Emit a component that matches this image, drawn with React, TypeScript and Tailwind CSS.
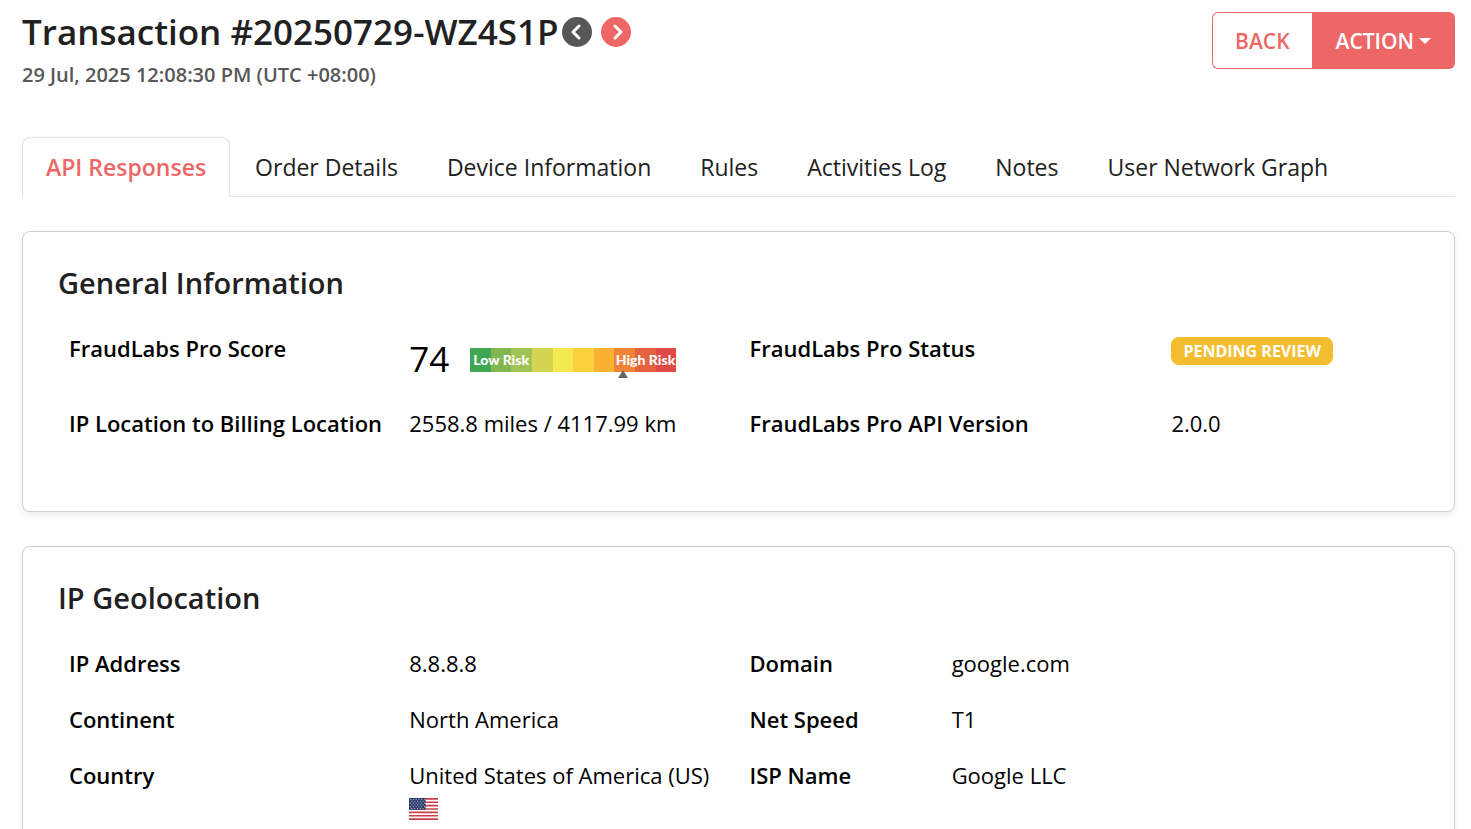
import { ReactNode } from 'react';

const tabs = [
  'API Responses',
  'Order Details',
  'Device Information',
  'Rules',
  'Activities Log',
  'Notes',
  'User Network Graph',
];

const riskColors = [
  'bg-[#3fa653]',
  'bg-[#82b651]',
  'bg-[#9fc354]',
  'bg-[#d3d551]',
  'bg-[#f5e951]',
  'bg-[#fbd13e]',
  'bg-[#f8b133]',
  'bg-[#ef8338]',
  'bg-[#e5623f]',
  'bg-[#e04946]',
];

function Card({ title, children }: { title: string; children: ReactNode }) {
  return (
    <section className="rounded-lg border border-[#cfcfcf] bg-white px-[35px] pt-[31px] pb-[70px] shadow-[0_3px_6px_rgba(0,0,0,0.08)]">
      <h2 className="text-[29px] leading-10 font-semibold text-[#212121]">{title}</h2>
      {children}
    </section>
  );
}

function Term({ children }: { children: ReactNode }) {
  return <dt className="px-[11px] font-semibold">{children}</dt>;
}

function Value({ children }: { children: ReactNode }) {
  return <dd className="px-[11px]">{children}</dd>;
}

function RiskMeter({ score }: { score: number }) {
  return (
    <div className="flex items-end gap-[21px] pt-[6px]">
      <span className="text-[35px] leading-[42px]">{score}</span>
      <div className="relative mb-2 flex h-6 w-[206px]">
        {riskColors.map((color) => (
          <span key={color} className={`flex-1 ${color}`} />
        ))}
        <div className="absolute inset-0 flex items-center justify-between pr-px pl-[3px] font-[Lato,sans-serif] text-sm leading-6 font-black text-white">
          <span>Low Risk</span>
          <span>High Risk</span>
        </div>
        <svg
          className="absolute top-[22px] h-2 w-[10px] -translate-x-1/2"
          style={{ left: `${score}%` }}
          viewBox="0 0 10 8"
          aria-hidden="true"
        >
          <path d="M5 0l5 8H0z" fill="#666" />
        </svg>
      </div>
    </div>
  );
}

function UsFlag() {
  return (
    <svg className="mt-[7px] h-[22px] w-[29px]" viewBox="0 0 29 22" role="img" aria-label="United States">
      <path fill="#fff" d="M0 0h29v22H0z" />
      <path
        stroke="#c8414b"
        strokeWidth="1.7"
        d="M0 .85h29M0 4.23h29M0 7.61h29M0 11h29M0 14.38h29M0 17.76h29M0 21.15h29"
      />
      <path fill="#2f3f6e" d="M0 0h16.5v11.8H0z" />
      <path
        stroke="#a9b3cc"
        strokeWidth="1"
        strokeDasharray="1 1.8"
        d="M1 1.5h15M2.4 3.3h13M1 5.1h15M2.4 6.9h13M1 8.7h15M2.4 10.5h13"
      />
    </svg>
  );
}

function ArrowLink({ label, color, path }: { label: string; color: string; path: string }) {
  return (
    <a href="#" aria-label={label} className={`flex size-[30px] items-center justify-center rounded-full ${color}`}>
      <svg viewBox="0 0 30 30" className="size-[30px]" fill="none" stroke="#fff" strokeWidth="3" aria-hidden="true">
        <path d={path} strokeLinecap="round" strokeLinejoin="round" />
      </svg>
    </a>
  );
}

export default function App() {
  return (
    <main className="bg-white pr-4 pb-9 pl-[22px] pt-3 font-['Open_Sans',sans-serif] text-[22px] leading-8 text-black">
      <header className="flex items-start justify-between">
        <div>
          <div className="flex items-center gap-1">
            <h1 className="text-[35px] leading-10 font-semibold text-[#212121]">Transaction #20250729-WZ4S1P</h1>
            <div className="flex gap-[9px]">
              <ArrowLink label="Previous transaction" color="bg-[#575757]" path="M17 9l-6 6 6 6" />
              <ArrowLink label="Next transaction" color="bg-[#ec6765]" path="M14 9l6 6-6 6" />
            </div>
          </div>
          <p className="mt-2 text-xl leading-[30px] font-semibold text-[#575757]">
            29 Jul, 2025 12:08:30 PM (UTC +08:00)
          </p>
        </div>
        <div className="flex h-[57px] text-[21px] font-semibold">
          <button type="button" className="rounded-l-md border border-r-0 border-[#ec6765] px-[22px] text-[#ec6765]">
            BACK
          </button>
          <button type="button" className="flex items-center gap-[5px] rounded-r-md bg-[#ec6765] px-6 text-white">
            ACTION
            <svg viewBox="0 0 12 6" className="h-[6px] w-3" aria-hidden="true">
              <path d="M0 0h12L6 6z" fill="#fff" />
            </svg>
          </button>
        </div>
      </header>

      <nav className="mt-[47px] flex gap-px border-b border-[#dee2e6] text-[23px]">
        {tabs.map((tab, i) => (
          <a
            key={tab}
            href="#"
            className={`-mb-px rounded-t-lg border px-[23px] pt-[13px] pb-[13px] ${
              i === 0
                ? 'border-[#dee2e6] border-b-white bg-white font-semibold text-[#ec6765]'
                : 'border-transparent text-[#212121]'
            }`}
          >
            {tab}
          </a>
        ))}
      </nav>

      <div className="mt-[34px] flex flex-col gap-[34px]">
        <Card title="General Information">
          <dl className="mt-[29px] grid grid-cols-[25fr_25fr_31fr_19fr] gap-y-[27px] pb-[2px]">
            <Term>FraudLabs Pro Score</Term>
            <Value>
              <RiskMeter score={74} />
            </Value>
            <Term>FraudLabs Pro Status</Term>
            <Value>
              <span className="inline-block rounded-lg bg-[#f4bd2f] px-3 text-base leading-7 font-bold text-white">
                PENDING REVIEW
              </span>
            </Value>
            <Term>IP Location to Billing Location</Term>
            <Value>2558.8 miles / 4117.99 km</Value>
            <Term>FraudLabs Pro API Version</Term>
            <Value>2.0.0</Value>
          </dl>
        </Card>

        <Card title="IP Geolocation">
          <dl className="mt-[29px] grid grid-cols-[101fr_101fr_60fr_142fr] gap-y-6">
            <Term>IP Address</Term>
            <Value>8.8.8.8</Value>
            <Term>Domain</Term>
            <Value>google.com</Value>
            <Term>Continent</Term>
            <Value>North America</Value>
            <Term>Net Speed</Term>
            <Value>T1</Value>
            <Term>Country</Term>
            <Value>
              United States of America (US)
              <UsFlag />
            </Value>
            <Term>ISP Name</Term>
            <Value>Google LLC</Value>
          </dl>
        </Card>
      </div>
    </main>
  );
}
